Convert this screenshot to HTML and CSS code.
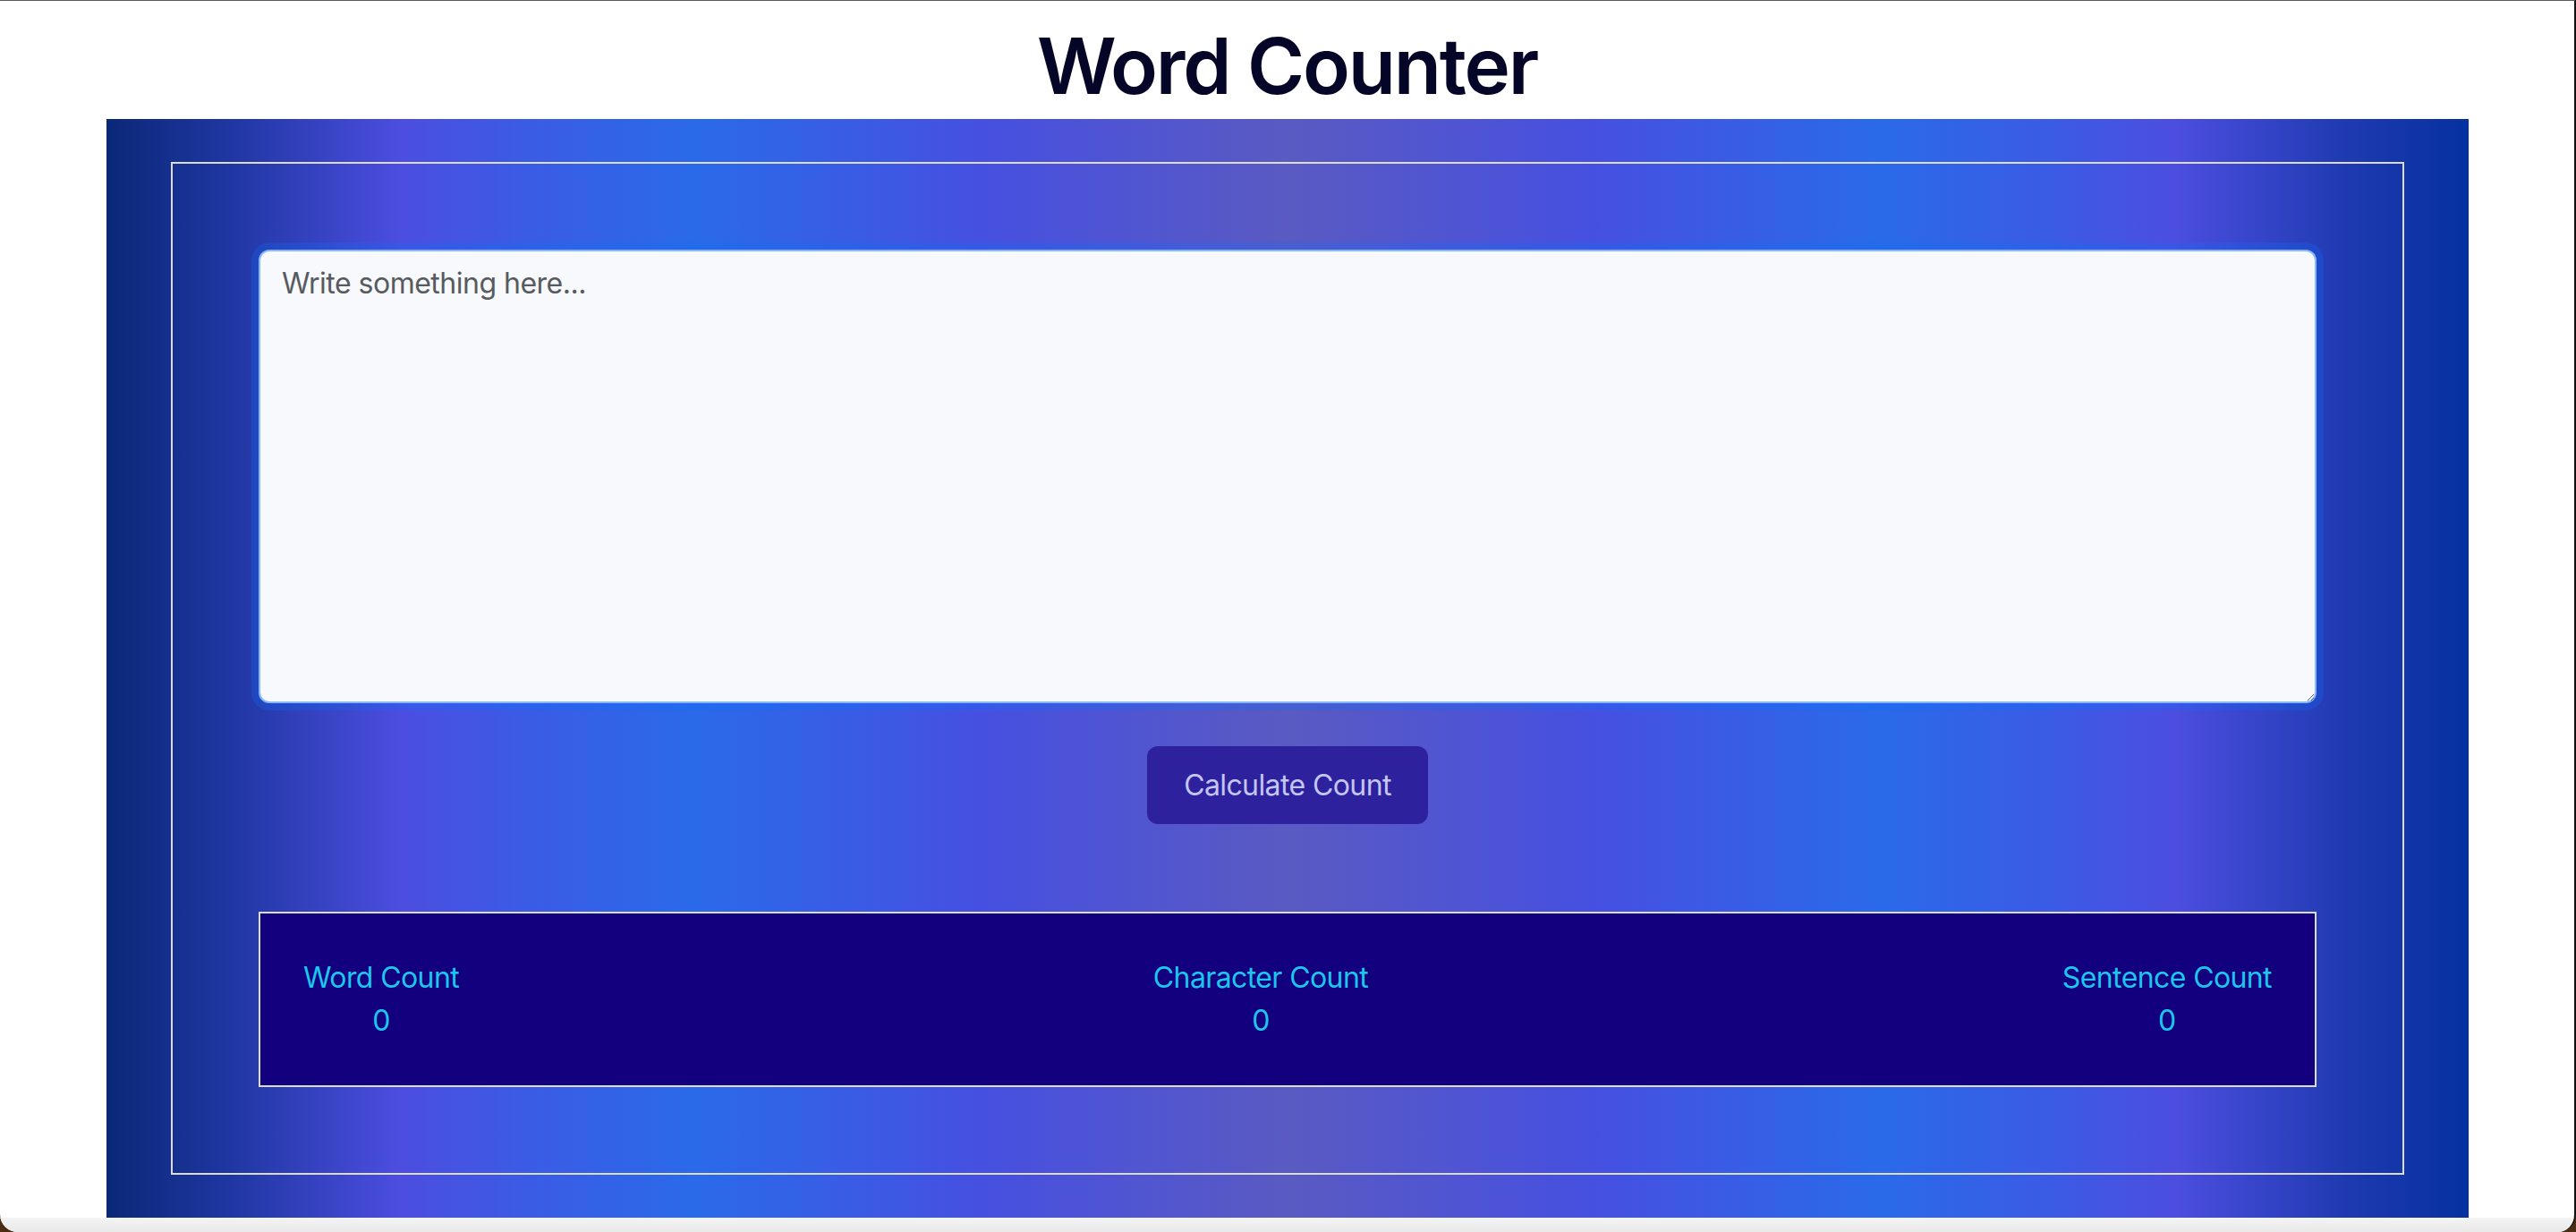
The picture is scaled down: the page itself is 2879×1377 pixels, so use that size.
FILE: index.html
```html
<!DOCTYPE html>
<html lang="en">
<head>
<meta charset="utf-8">
<title>Word Counter</title>
<link rel="stylesheet" href="styles.css">
</head>
<body>
<div class="window">
  <h1 class="title">Word Counter</h1>
  <main class="panel">
    <div class="frame">
      <textarea class="text-input" placeholder="Write something here..."></textarea>
      <div class="actions">
        <button class="calc-btn" type="button">Calculate Count</button>
      </div>
      <div class="stats">
        <div class="stat">
          <div class="stat-label">Word Count</div>
          <div class="stat-value">0</div>
        </div>
        <div class="stat">
          <div class="stat-label">Character Count</div>
          <div class="stat-value">0</div>
        </div>
        <div class="stat">
          <div class="stat-label">Sentence Count</div>
          <div class="stat-value">0</div>
        </div>
      </div>
    </div>
  </main>
  <div class="window-bottom"></div>
</div>
</body>
</html>
```

FILE: styles.css
```css
html {
  background: #4a2d12;
}

body {
  margin: 0;
  height: 1377px;
  overflow: hidden;
  font-family: Inter, "Noto Sans", sans-serif;
}

.window {
  box-sizing: border-box;
  height: 1377px;
  background: #ffffff;
  border-top: 1px solid #5a5a5a;
  border-right: 2px solid #111111;
  border-radius: 0 0 20px 20px;
  display: flex;
  flex-direction: column;
  align-items: center;
  overflow: hidden;
}

.title {
  margin: 0;
  height: 132px;
  box-sizing: border-box;
  padding-top: 13px;
  font-size: 87px;
  line-height: 119px;
  font-weight: 600;
  letter-spacing: -2.2px;
  color: #050527;
  text-align: center;
}

.panel {
  width: 2640px;
  margin-left: 1px;
  box-sizing: border-box;
  padding: 48px 72px 48px 72px;
  background: linear-gradient(90deg,
    #0a2878 0%,
    #1e36a0 5%,
    #4c4ee0 12.5%,
    #3a5ce4 18%,
    #2a6ae8 25%,
    #4650e0 37%,
    #5a5ac2 50%,
    #4650e0 63%,
    #2a6ae8 75%,
    #3a5ce4 82%,
    #4c4ee0 87.5%,
    #1e3ab0 95%,
    #0530a0 100%);
}

.frame {
  border: 2px solid #dcdcdc;
  padding: 96px;
  display: flex;
  flex-direction: column;
}

.text-input {
  display: block;
  box-sizing: border-box;
  width: 100%;
  height: 507px;
  margin: 0;
  padding: 12px 24px;
  font-family: Inter, "Noto Sans", sans-serif;
  font-size: 32px;
  line-height: 48px;
  letter-spacing: -0.5px;
  color: #212529;
  background: #f8f9fc;
  border: 2px solid #86b7fe;
  border-radius: 12px;
  box-shadow: 0 0 0 8px rgba(13, 110, 253, 0.25);
  outline: none;
  resize: vertical;
}

.text-input::placeholder {
  color: #565b60;
  opacity: 1;
}

.actions {
  display: flex;
  justify-content: center;
  margin-top: 48px;
}

.calc-btn {
  height: 87px;
  padding: 0 41px;
  font-family: Inter, "Noto Sans", sans-serif;
  font-size: 32px;
  line-height: 48px;
  letter-spacing: -0.6px;
  color: #c3c6f0;
  background: #2e219e;
  border: none;
  border-radius: 12px;
  cursor: pointer;
}

.stats {
  margin-top: 98px;
  border: 2px solid #dcdcdc;
  background: #12007e;
  padding: 48px;
  display: flex;
  justify-content: space-between;
}

.stat {
  text-align: center;
  font-size: 32px;
  line-height: 48px;
  letter-spacing: -0.6px;
  color: #1cc6ec;
}

.window-bottom {
  flex: 1;
  align-self: stretch;
  background: linear-gradient(180deg, #f4f4f4, #e9e9e9);
}
```
